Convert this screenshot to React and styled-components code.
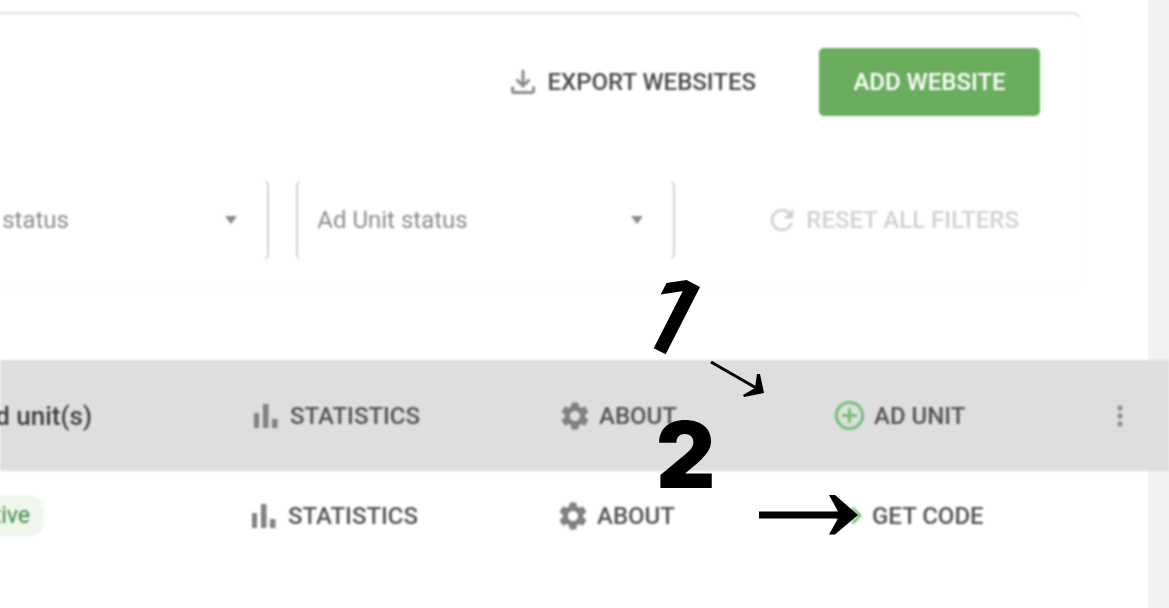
import React from 'react';
import styled, { createGlobalStyle } from 'styled-components';
import {
  MdSettings,
  MdAddCircleOutline,
  MdMoreVert,
  MdRefresh,
  MdOutlineFileDownload,
  MdCode,
} from 'react-icons/md';

const GlobalStyle = createGlobalStyle`
  html, body {
    margin: 0;
    padding: 0;
    overflow: hidden;
    background: #fff;
  }
  body {
    font-family: Roboto, "Liberation Sans", sans-serif;
  }
`;

const BarsIcon = () => (
  <BarsSvg viewBox="0 0 24 24" width="24" height="24">
    <rect x="0" y="9" width="5" height="15" />
    <rect x="9" y="0" width="5.500" height="24" />
    <rect x="18" y="15" width="5.500" height="9" />
  </BarsSvg>
);

const App = () => (
  <>
    <GlobalStyle />
    <Page>
      <Blurred>
        <Card>
          <Actions>
            <ExportLink>
              <MdOutlineFileDownload size={36} />
              EXPORT WEBSITES
            </ExportLink>
            <AddButton>ADD WEBSITE</AddButton>
          </Actions>
          <Filters>
            <Select $width={380}>
              <SelectLabel>Website status</SelectLabel>
              <Caret />
            </Select>
            <Select $width={379}>
              <SelectLabel>Ad Unit status</SelectLabel>
              <Caret />
            </Select>
            <ResetLink>
              <MdRefresh size={34} />
              RESET ALL FILTERS
            </ResetLink>
          </Filters>
        </Card>

        <Row $lead={254} $height={111} $highlighted>
          <NameCell $inset={162}>
            <UnitName>Ad unit(s)</UnitName>
          </NameCell>
          <RowLink>
            <BarsIcon />
            STATISTICS
          </RowLink>
          <RowLink>
            <MdSettings size={34} />
            ABOUT
          </RowLink>
          <RowLink>
            <GreenIcon><MdAddCircleOutline size={35} /></GreenIcon>
            AD UNIT
          </RowLink>
          <MoreCell>
            <MdMoreVert size={32} />
          </MoreCell>
        </Row>

        <Row $lead={252} $height={89}>
          <NameCell $inset={208}>
            <StatusBadge>Active</StatusBadge>
          </NameCell>
          <RowLink>
            <BarsIcon />
            STATISTICS
          </RowLink>
          <RowLink>
            <MdSettings size={34} />
            ABOUT
          </RowLink>
          <RowLink>
            <GreenIcon><MdCode size={35} /></GreenIcon>
            GET CODE
          </RowLink>
        </Row>
      </Blurred>

      <NumberOne>1</NumberOne>
      <NumberTwo>2</NumberTwo>
      <ArrowOne viewBox="0 0 60 40" width="60" height="40">
        <path d="M1 2 L48 29" stroke="#000" strokeWidth="3" fill="none" />
        <path d="M47 14 L50 14 L54 33 L34 37 L33 35 L45 28 Z" fill="#000" />
      </ArrowOne>
      <ArrowTwo viewBox="0 0 104 42" width="104" height="42">
        <rect x="0" y="16.500" width="88" height="7" fill="#000" />
        <path d="M70 0 L76 0 L99 20 L76 39.500 L70 39.500 L81 20 Z" fill="#000" />
      </ArrowTwo>
    </Page>
  </>
);

export default App;

const Page = styled.div`
  position: relative;
  width: 1169px;
  height: 608px;
  overflow: hidden;
  background: linear-gradient(to right, #fff 1148px, #f2f2f2 1148px);
`;

const Blurred = styled.div`
  display: flex;
  flex-direction: column;
  padding-top: 12px;
  filter: blur(0.8px);
`;

const Card = styled.section`
  box-sizing: border-box;
  width: 1083px;
  height: 277px;
  margin-bottom: 71px;
  border-top: 2px solid #dedede;
  border-right: 1px solid #fcfcfc;
  border-bottom: 1px solid #fdfdfd;
  border-radius: 0 12px 10px 0;
`;

const Actions = styled.div`
  display: flex;
  justify-content: flex-end;
  align-items: center;
  gap: 63px;
  height: 68px;
  margin-top: 34px;
  padding-right: 42px;
`;

const ExportLink = styled.div`
  display: flex;
  align-items: center;
  gap: 7px;
  font-size: 24px;
  font-weight: 500;
  color: #4a4a4a;
  white-space: nowrap;

  svg {
    color: #8a8a8a;
  }
`;

const AddButton = styled.div`
  display: flex;
  align-items: center;
  justify-content: center;
  width: 221px;
  height: 68px;
  border-radius: 5px;
  background: #6aad5e;
  color: #fff;
  font-size: 24px;
  font-weight: 500;
`;

const Filters = styled.div`
  display: flex;
  justify-content: flex-end;
  align-items: center;
  height: 80px;
  margin-top: 64px;
  padding-right: 63px;
`;

const Select = styled.div`
  flex: 0 0 ${props => props.$width}px;
  box-sizing: border-box;
  height: 80px;
  margin-right: 27px;
  padding: 0 30px 0 19px;
  display: flex;
  align-items: center;
  justify-content: space-between;
  border-left: 2px solid #cfcfcf;
  border-right: 2px solid #cfcfcf;
  border-radius: 6px;
`;

const SelectLabel = styled.span`
  font-size: 24px;
  color: #8c8c8c;
  white-space: nowrap;
`;

const Caret = styled.span`
  width: 0;
  height: 0;
  border-left: 6px solid transparent;
  border-right: 6px solid transparent;
  border-top: 8px solid #8a8a8a;
`;

const ResetLink = styled.div`
  flex: 0 0 auto;
  display: flex;
  align-items: center;
  gap: 7px;
  margin-left: 63px;
  font-size: 24px;
  font-weight: 500;
  color: #d0d0d0;
  white-space: nowrap;
`;

const Row = styled.div`
  display: grid;
  grid-template-columns: ${props => props.$lead}px 304px 274px 246px 1fr;
  align-items: center;
  height: ${props => props.$height}px;
  background: ${props => (props.$highlighted ? '#dedede' : 'transparent')};
`;

const NameCell = styled.div`
  display: flex;
  justify-content: flex-end;
  padding-right: ${props => props.$inset}px;
  white-space: nowrap;
  min-width: 0;
`;

const UnitName = styled.span`
  font-size: 26px;
  font-weight: 500;
  color: #3f3f3f;
`;

const StatusBadge = styled.span`
  display: inline-flex;
  align-items: center;
  height: 42px;
  padding: 0 14px;
  border-radius: 16px;
  background: #f0f6ee;
  color: #3d8f3d;
  font-size: 23px;
`;

const RowLink = styled.div`
  display: flex;
  align-items: center;
  gap: 7px;
  font-size: 24px;
  font-weight: 500;
  color: #525252;
  white-space: nowrap;

  svg {
    color: #808080;
  }
`;

const BarsSvg = styled.svg`
  margin-right: 5px;
  fill: #808080;
`;

const GreenIcon = styled.span`
  display: flex;

  svg {
    color: #6fbf70;
  }
`;

const MoreCell = styled.div`
  display: flex;
  padding-left: 26px;

  svg {
    color: #8c8c8c;
  }
`;

const NumberOne = styled.span`
  position: absolute;
  left: 648px;
  top: 262px;
  font-family: Inter, "Liberation Sans", sans-serif;
  font-weight: 600;
  font-size: 104px;
  line-height: 1;
  color: #000;
  transform: rotate(27deg);
`;

const NumberTwo = styled.span`
  position: absolute;
  left: 656px;
  top: 409px;
  font-family: Inter, "Liberation Sans", sans-serif;
  font-weight: 900;
  font-size: 92px;
  line-height: 1;
  color: #000;
`;

const ArrowOne = styled.svg`
  position: absolute;
  left: 710px;
  top: 360px;
`;

const ArrowTwo = styled.svg`
  position: absolute;
  left: 759px;
  top: 495px;
`;
